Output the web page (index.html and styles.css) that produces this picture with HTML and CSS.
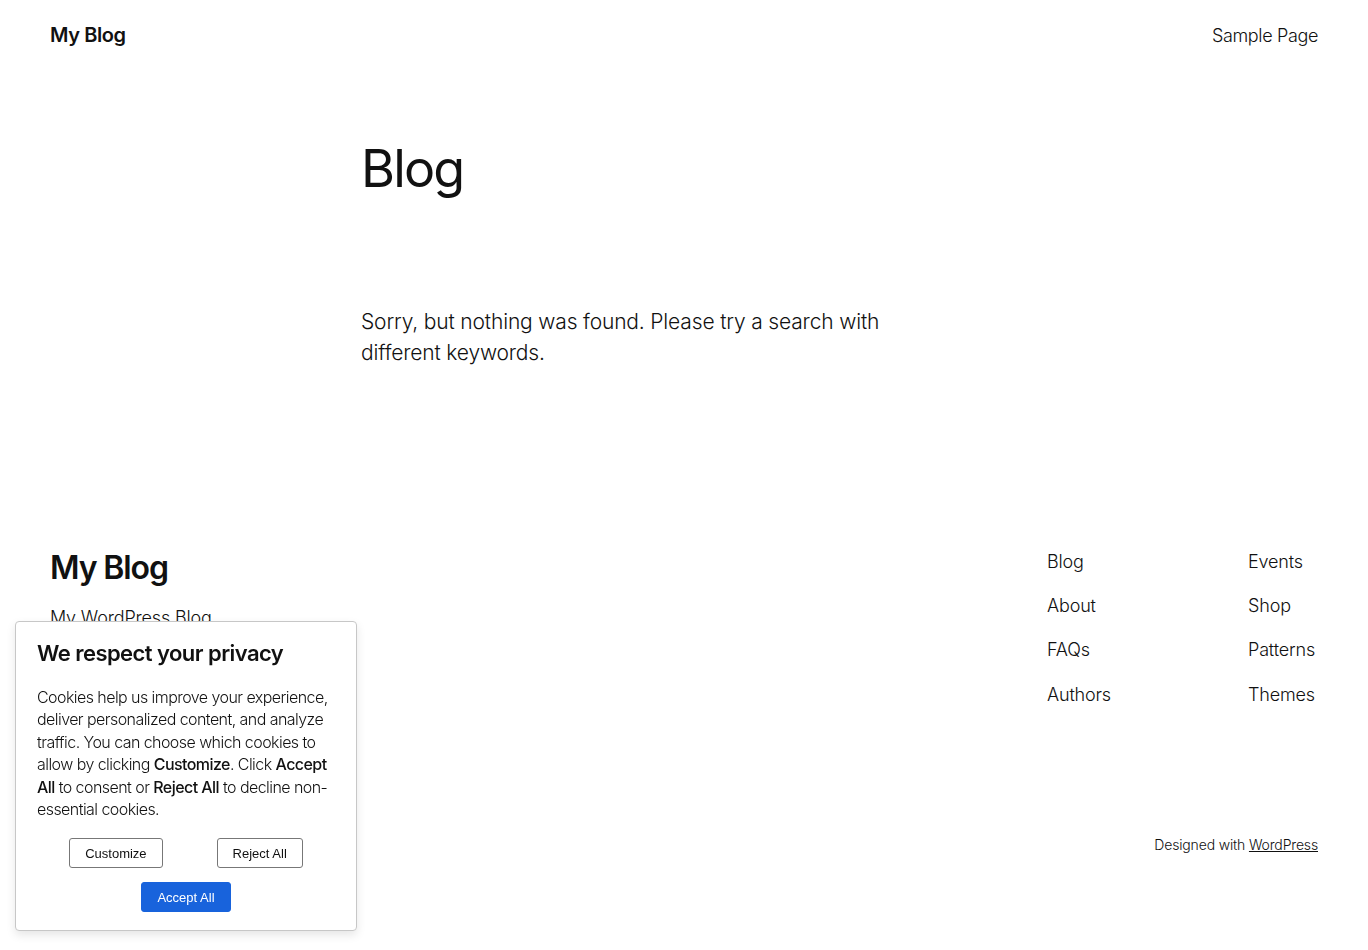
FILE: index.html
```html
<!DOCTYPE html>
<html lang="en">
  <head>
    <meta charset="UTF-8" />
    <meta name="viewport" content="width=device-width, initial-scale=1.0" />
    <title>Blog – My Blog</title>
    <link rel="stylesheet" href="styles.css">
  </head>
  <body>
    <!-- site header -->
    <header class="site-header">
      <a class="site-title" href="#">My Blog</a>
      <nav class="header-nav">
        <a href="#">Sample Page</a>
      </nav>
    </header>

    <!-- main content -->
    <main class="site-main">
      <h1 class="page-title">Blog</h1>
      <p class="no-results">
        Sorry, but nothing was found. Please try a search with different keywords.
      </p>
    </main>

    <!-- footer -->
    <footer class="site-footer">
      <div class="footer-top">
        <div class="footer-brand">
          <a class="footer-title" href="#">My Blog</a>
          <p class="tagline">My WordPress Blog</p>
        </div>
        <div class="footer-links">
          <ul class="link-col">
            <li><a href="#">Blog</a></li>
            <li><a href="#">About</a></li>
            <li><a href="#">FAQs</a></li>
            <li><a href="#">Authors</a></li>
          </ul>
          <ul class="link-col">
            <li><a href="#">Events</a></li>
            <li><a href="#">Shop</a></li>
            <li><a href="#">Patterns</a></li>
            <li><a href="#">Themes</a></li>
          </ul>
        </div>
      </div>
      <p class="credit">Designed with <a href="#">WordPress</a></p>
    </footer>

    <!-- cookie consent banner -->
    <div class="cookie-banner">
      <h2 class="cookie-title">We respect your privacy</h2>
      <p class="cookie-text">
        Cookies help us improve your experience, deliver personalized content,
        and analyze traffic. You can choose which cookies to allow by clicking
        <b>Customize</b>. Click <b>Accept All</b> to consent or <b>Reject All</b>
        to decline non-essential cookies.
      </p>
      <div class="cookie-actions">
        <button class="btn">Customize</button>
        <button class="btn">Reject All</button>
      </div>
      <div class="cookie-accept">
        <button class="btn btn-primary">Accept All</button>
      </div>
    </div>
  </body>
</html>
```

FILE: styles.css
```css
/* reset */
* {
  margin: 0;
  padding: 0;
  box-sizing: border-box;
}

body {
  font-family: "Inter", "Noto Sans", sans-serif;
  color: #111111;
  background: #ffffff;
  letter-spacing: -0.01em;
}

a {
  color: inherit;
  text-decoration: none;
}

ul {
  list-style: none;
}

/* header */
.site-header {
  display: flex;
  justify-content: space-between;
  align-items: center;
  height: 70px;
  padding: 0 50px;
}

.site-title {
  font-size: 20px;
  font-weight: 600;
  letter-spacing: -0.02em;
}

.header-nav a {
  font-size: 18px;
  font-weight: 300;
  letter-spacing: -0.02em;
}

/* main */
.site-main {
  width: 646px;
  margin: 0 auto;
  padding: 68px 0 0;
  min-height: 479px;
}

.page-title {
  font-size: 52px;
  font-weight: 400;
  line-height: 1.2;
  letter-spacing: -0.035em;
}

.no-results {
  margin-top: 107px;
  max-width: 560px;
  font-size: 21px;
  font-weight: 300;
  line-height: 1.47;
}

/* footer */
.site-footer {
  padding: 0 50px;
}

.footer-top {
  display: flex;
  justify-content: space-between;
  align-items: flex-start;
}

.footer-title {
  font-size: 32px;
  font-weight: 600;
  line-height: 1.2;
  letter-spacing: -0.035em;
}

.tagline {
  margin-top: 20px;
  font-size: 18px;
  font-weight: 300;
}

.footer-links {
  display: flex;
}

.link-col {
  display: flex;
  flex-direction: column;
  gap: 19px;
  width: 201px;
  font-size: 18px;
  font-weight: 300;
  line-height: 1.4;
}

.link-col:last-child {
  width: 70px;
}

.credit {
  margin-top: 129px;
  text-align: right;
  font-size: 14px;
  font-weight: 300;
}

.credit a {
  text-decoration: underline;
}

/* cookie banner */
.cookie-banner {
  position: fixed;
  left: 15px;
  bottom: 19px;
  width: 342px;
  padding: 17px 21px 18px;
  background: #ffffff;
  border: 1px solid #c7c7c7;
  border-radius: 4px;
  box-shadow: 0 4px 10px rgba(0, 0, 0, 0.1);
}

.cookie-title {
  font-size: 22px;
  font-weight: 600;
  line-height: 1.3;
  letter-spacing: -0.025em;
}

.cookie-text {
  margin-top: 18px;
  font-size: 16px;
  font-weight: 300;
  line-height: 1.41;
  letter-spacing: -0.035em;
}

.cookie-text b {
  font-weight: 500;
}

.cookie-actions {
  display: flex;
  justify-content: center;
  gap: 54px;
  margin-top: 17px;
}

.cookie-accept {
  display: flex;
  justify-content: center;
  margin-top: 14px;
}

.btn {
  font-family: "Liberation Sans", Arial, sans-serif;
  font-size: 13px;
  letter-spacing: 0;
  color: #111111;
  background: #ffffff;
  border: 1px solid #777777;
  border-radius: 3px;
  height: 30px;
  padding: 0 15px;
}

.btn-primary {
  background: #1863dc;
  border-color: #1863dc;
  color: #ffffff;
}
```
